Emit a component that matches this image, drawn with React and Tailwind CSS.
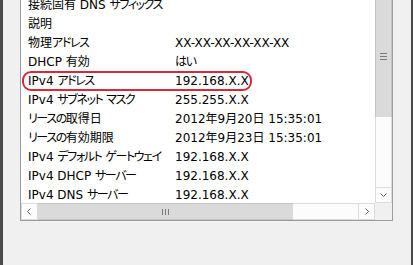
import React from "react";

const rows = [
  ["接続固有 DNS サフィックス", ""],
  ["説明", ""],
  ["物理アドレス", "XX-XX-XX-XX-XX-XX"],
  ["DHCP 有効", "はい"],
  ["IPv4 アドレス", "192.168.X.X"],
  ["IPv4 サブネット マスク", "255.255.X.X"],
  ["リースの取得日", "2012年9月20日 15:35:01"],
  ["リースの有効期限", "2012年9月23日 15:35:01"],
  ["IPv4 デフォルト ゲートウェイ", "192.168.X.X"],
  ["IPv4 DHCP サーバー", "192.168.X.X"],
  ["IPv4 DNS サーバー", "192.168.X.X"],
];

function JText({ text }) {
  const parts = text.split(/([\u3040-\u30ff]+)/).filter((p) => p !== "");
  return (
    <>
      {parts.map((p, i) =>
        /^[\u3040-\u30ff]+$/.test(p) ? (
          <span key={i} className="tracking-[-1.4px]">{p}</span>
        ) : (
          <span key={i}>{p}</span>
        )
      )}
    </>
  );
}

function Chevron({ dir }) {
  const paths = {
    down: "M1.5 2.5 L4.5 5.5 L7.5 2.5",
    left: "M5.5 1.5 L2.5 4.5 L5.5 7.5",
    right: "M3.5 1.5 L6.5 4.5 L3.5 7.5",
  };
  return (
    <svg width="9" height="9" viewBox="0 0 9 9">
      <path d={paths[dir]} fill="none" stroke="#606060" strokeWidth="1" />
    </svg>
  );
}

export default function App() {
  return (
    <div
      className="w-[413px] h-[265px] bg-[#f0f0f0] flex overflow-hidden text-[12px] text-black [font-feature-settings:'palt']"
      style={{ fontFamily: '"DejaVu Sans", "Noto Sans CJK JP", sans-serif' }}
    >
      <div className="w-[3px] shrink-0 bg-[#4a4a4a]" />
      <div className="flex-1 flex flex-col">
        <div className="ml-[17px] w-[373px] mt-[-6px] border border-[#9c9c9c] bg-white flex flex-col">
          <div className="flex h-[208px]">
            <div className="flex-1 flex flex-col">
              {rows.map(([k, v], i) => (
                <div key={i} className="relative h-[19px] shrink-0 flex items-center whitespace-nowrap">
                  <div className="w-[154px] shrink-0 pl-[7px]">
                    <JText text={k} />
                  </div>
                  <div>
                    <JText text={v} />
                  </div>
                  {i === 4 && (
                    <div className="absolute left-[1px] top-0 w-[230px] h-[20px] border-2 border-[#d42a3e] rounded-[9px]" />
                  )}
                </div>
              ))}
            </div>
            <div className="w-[17px] flex flex-col">
              <div className="h-[122px] bg-[#dadada] border-x border-[#c4c4c4] flex items-center justify-center">
                <div className="flex flex-col gap-[2px]">
                  <div className="w-[7px] h-px bg-[#7a7a7a]" />
                  <div className="w-[7px] h-px bg-[#7a7a7a]" />
                  <div className="w-[7px] h-px bg-[#7a7a7a]" />
                </div>
              </div>
              <div className="flex-1 bg-[#fcfcfc] border-x border-[#dcdcdc]" />
              <div className="h-[16px] bg-[#fcfcfc] border border-[#dcdcdc] flex items-center justify-center">
                <Chevron dir="down" />
              </div>
            </div>
          </div>
          <div className="h-[17px] flex">
            <div className="w-[17px] bg-[#fcfcfc] border border-[#dcdcdc] flex items-center justify-center">
              <Chevron dir="left" />
            </div>
            <div className="w-[255px] bg-[#dadada] border-y border-[#c4c4c4] flex items-center justify-center">
              <div className="flex gap-[2px]">
                <div className="w-px h-[6px] bg-[#7a7a7a]" />
                <div className="w-px h-[6px] bg-[#7a7a7a]" />
                <div className="w-px h-[6px] bg-[#7a7a7a]" />
              </div>
            </div>
            <div className="flex-1 bg-[#fcfcfc] border-y border-[#dcdcdc]" />
            <div className="w-[17px] bg-[#fcfcfc] border border-[#dcdcdc] flex items-center justify-center">
              <Chevron dir="right" />
            </div>
            <div className="w-[17px] bg-[#f0f0f0]" />
          </div>
        </div>
      </div>
      <div className="w-[2px] shrink-0 bg-[#4a4a4a]" />
    </div>
  );
}
